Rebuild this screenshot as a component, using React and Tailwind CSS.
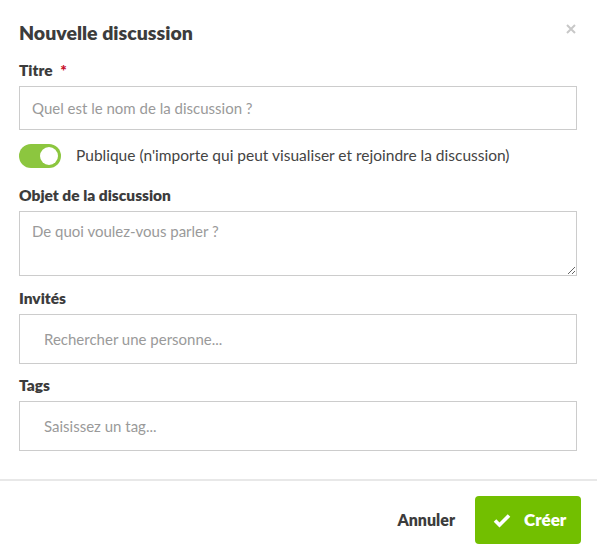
import React, { useState } from 'react';

const font = { fontFamily: 'Lato, "Noto Sans", sans-serif' };

const Label = ({ children, className = '' }) => (
  <label className={`block h-5 leading-5 text-[15.5px] font-extrabold text-[#3c3c3c] ${className}`}>{children}</label>
);

const App = () => {
  const [isPublic, setIsPublic] = useState(true);

  return (
    <div className="w-[597px] h-[559px] bg-white" style={font}>
      <div className="px-[19px] pr-5">
        <div className="flex items-center justify-between pt-[21px]">
          <h2 className="h-6 leading-6 text-[19.5px] font-extrabold text-[#3c3c3c]">Nouvelle discussion</h2>
          <button className="-mr-[3px] -mt-2 p-1">
            <svg width="10" height="10" viewBox="0 0 10 10">
              <path d="M1 1L9 9M9 1L1 9" stroke="#c8c8c8" strokeWidth="2" />
            </svg>
          </button>
        </div>

        <Label className="mt-[15px]">
          Titre <span className="ml-1 text-[#c8102e]">*</span>
        </Label>
        <input
          className="mt-[6px] block w-[558px] h-[44px] border border-[#cccccc] px-3 text-[15px] text-[#444] placeholder:text-[#9a9a9a] outline-none"
          placeholder="Quel est le nom de la discussion ?"
        />

        <div className="mt-[14px] flex items-center h-6">
          <button
            onClick={() => setIsPublic(!isPublic)}
            className={`relative w-[42px] h-6 rounded-full ${isPublic ? 'bg-[#8cc63f]' : 'bg-[#ccc]'}`}
          >
            <span className={`absolute top-[3px] w-[18px] h-[18px] rounded-full bg-white ${isPublic ? 'left-[21px]' : 'left-[3px]'}`}></span>
          </button>
          <span className="ml-[15px] text-[15.5px] text-[#444]">
            Publique (n'importe qui peut visualiser et rejoindre la discussion)
          </span>
        </div>

        <Label className="mt-[17px]">Objet de la discussion</Label>
        <textarea
          className="mt-[6px] block w-[558px] h-[65px] border border-[#cccccc] px-3 py-[8px] text-[15px] text-[#444] placeholder:text-[#9a9a9a] outline-none"
          placeholder="De quoi voulez-vous parler ?"
        />

        <Label className="mt-3">Invités</Label>
        <input
          className="mt-[6px] block w-[558px] h-[50px] border border-[#cccccc] px-6 text-[15px] text-[#444] placeholder:text-[#9a9a9a] outline-none"
          placeholder="Rechercher une personne..."
        />

        <Label className="mt-[11px]">Tags</Label>
        <input
          className="mt-[6px] block w-[558px] h-[50px] border border-[#cccccc] px-6 text-[15px] text-[#444] placeholder:text-[#9a9a9a] outline-none"
          placeholder="Saisissez un tag..."
        />
      </div>

      <div className="mt-[28px] h-[2px] bg-[#e8e8e8]"></div>

      <div className="mt-[15px] flex items-center justify-end gap-5 pr-4">
        <button className="text-[16px] font-extrabold text-[#3c3c3c]">Annuler</button>
        <button className="flex items-center gap-[13px] w-[106px] h-12 rounded-[4px] bg-[#72bf00] pl-[18px] text-[17px] font-extrabold text-white">
          <svg width="18" height="15" viewBox="0 0 18 15">
            <path d="M2 7.5L6.5 12L16 2.5" fill="none" stroke="white" strokeWidth="3.6" />
          </svg>
          Créer
        </button>
      </div>
    </div>
  );
};

export default App;
